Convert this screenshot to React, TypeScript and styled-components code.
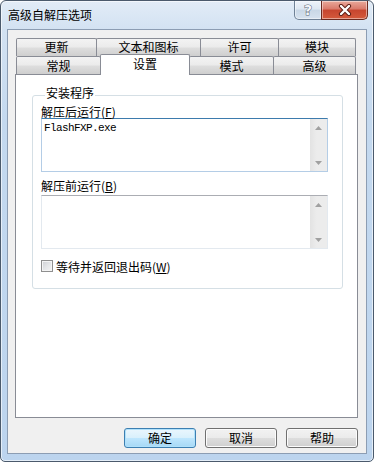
import * as React from "react"
import styled, { createGlobalStyle } from "styled-components"

const GlobalStyle = createGlobalStyle`
  html, body {
    margin: 0;
    padding: 0;
    background: #ffffff;
  }
  body {
    font-family: "Noto Sans CJK SC", "DejaVu Sans", sans-serif;
    font-size: 12px;
    color: #000;
  }
`

const Window = styled.div`
  box-sizing: border-box;
  width: 374px;
  height: 462px;
  border: 1px solid #4b5a6c;
  border-radius: 6px 6px 5px 5px;
  background: linear-gradient(180deg, #e2ecf7 0px, #d3e2f2 28px, #c4d9ef 120px, #bcd4ee 100%);
  box-shadow: inset 0 0 0 1px rgba(255, 255, 255, 0.6);
  padding: 0 6px 7px 6px;
  display: flex;
  flex-direction: column;
`

const TitleBar = styled.div`
  height: 28px;
  display: flex;
  align-items: flex-start;
`

const Title = styled.div`
  flex: 1;
  padding: 6px 0 0 1px;
  line-height: 16px;
  font-size: 12px;
  color: #000;
`

const CaptionButtons = styled.div`
  display: flex;
  margin-right: -1px;
`

const CaptionButton = styled.div<{ $close?: boolean }>`
  box-sizing: border-box;
  width: ${p => (p.$close ? 47 : 28)}px;
  height: 19px;
  display: flex;
  align-items: center;
  justify-content: center;
  border: 1px solid ${p => (p.$close ? "#6b2a20" : "#6f8196")};
  border-top: none;
  border-radius: ${p => (p.$close ? "0 0 5px 0" : "0 0 0 5px")};
  ${p => (p.$close ? "margin-left: -1px;" : "")}
  background: ${p =>
    p.$close
      ? "linear-gradient(180deg, #e9a99b 0%, #d9796a 45%, #c7452f 50%, #d45a3c 100%)"
      : "linear-gradient(180deg, #eef3fa 0%, #dde7f2 45%, #c9d7e6 50%, #d6e2ef 100%)"};
  box-shadow: inset 0 0 0 1px rgba(255, 255, 255, 0.45);
`

const HelpGlyph = styled.span`
  font-family: "DejaVu Sans", sans-serif;
  font-weight: bold;
  font-size: 14px;
  line-height: 14px;
  color: #f4f6f9;
  -webkit-text-stroke: 1px #5b6675;
  paint-order: stroke fill;
`

const Client = styled.div`
  flex: 1;
  background: #f0f0f0;
  border: 1px solid #8c9db3;
  padding: 8px 8px 5px 7px;
  display: flex;
  flex-direction: column;
`

const TabRow = styled.div`
  height: 18px;
  display: flex;
  padding-left: 1px;
`

// $back: tab of the rear row, its label sits a little higher
const Tab = styled.div<{ $w: number; $active?: boolean; $back?: boolean }>`
  box-sizing: border-box;
  width: ${p => p.$w}px;
  height: ${p => (p.$active ? 21 : 18)}px;
  ${p => (p.$active ? "margin-top: -2px; position: relative; z-index: 1;" : "")}
  margin-left: -1px;
  padding-top: ${p => (p.$back ? 0 : 1)}px;
  border: 1px solid #898c95;
  border-bottom: none;
  border-radius: 2px 2px 0 0;
  background: ${p =>
    p.$active
      ? "#ffffff"
      : "linear-gradient(180deg, #f3f3f3 0%, #ebebeb 48%, #dedede 52%, #cfcfcf 100%)"};
  text-align: center;
  line-height: 16px;
  font-size: 12px;
  color: #000;
  &:first-child {
    margin-left: 0;
  }
`

const Panel = styled.div`
  box-sizing: border-box;
  height: 344px;
  border: 1px solid #898c95;
  background: #ffffff;
  padding: 11px 14px 0 16px;
`

const Group = styled.fieldset`
  margin: 0;
  padding: 1px 14px 15px 8px;
  border: 1px solid #d5dfe5;
  border-radius: 3px;
  box-shadow: inset 1px 1px 0 #ffffff;
`

const Legend = styled.legend`
  padding: 0 1px 4px 1px;
  margin-left: 4px;
  line-height: 14px;
  font-size: 12px;
  color: #000;
`

const FieldLabel = styled.div<{ $gap?: number }>`
  line-height: 13px;
  margin-top: ${p => p.$gap ?? 0}px;
  font-size: 12px;
`

const TextBox = styled.div<{ $focused?: boolean; $mb?: number }>`
  box-sizing: border-box;
  height: 54px;
  margin-top: ${p => p.$mb ?? 0}px;
  display: flex;
  border: 1px solid ${p => (p.$focused ? "#b4cde6" : "#e3e9ef")};
  border-top-color: ${p => (p.$focused ? "#3d7bad" : "#abadb3")};
  background: #ffffff;
`

const TextContent = styled.div`
  flex: 1;
  padding: 2px 2px 0 2px;
  font-family: "Liberation Mono", "DejaVu Sans Mono", monospace;
  font-size: 11px;
  letter-spacing: -0.6px;
  line-height: 14px;
  color: #000;
`

const ScrollBar = styled.div`
  width: 17px;
  background: linear-gradient(90deg, #e3e3e3 0%, #ececec 40%, #ececec 100%);
  display: flex;
  flex-direction: column;
  justify-content: space-between;
`

const ScrollArrow = styled.div`
  height: 17px;
  display: flex;
  align-items: center;
  justify-content: center;
`

const CheckRow = styled.div`
  margin-top: 10px;
  display: flex;
  align-items: center;
  height: 14px;
`

const CheckBox = styled.div`
  box-sizing: border-box;
  width: 12px;
  height: 12px;
  border: 1px solid #8f8f8f;
  background: linear-gradient(135deg, #cdcfd3 0%, #e4e5e7 50%, #f5f5f5 100%);
  box-shadow: inset 0 0 0 1px #f4f4f4;
  margin-right: 3px;
`

const ButtonRow = styled.div`
  margin-top: 10px;
  display: flex;
  justify-content: flex-end;
  gap: 9px;
`

const Button = styled.div<{ $default?: boolean }>`
  box-sizing: border-box;
  width: 72px;
  height: 20px;
  border: 1px solid ${p => (p.$default ? "#3c7fb1" : "#707070")};
  border-radius: 3px;
  background: ${p =>
    p.$default
      ? "linear-gradient(180deg, #eaf6fd 0%, #d9f0fc 48%, #bee6fd 52%, #a7d9f5 100%)"
      : "linear-gradient(180deg, #f2f2f2 0%, #ebebeb 48%, #dddddd 52%, #cfcfcf 100%)"};
  box-shadow: inset 0 0 0 1px ${p => (p.$default ? "#b0e1fb" : "#fcfcfc")};
  text-align: center;
  line-height: 18px;
  font-size: 12px;
  color: #000;
`

const Arrow = ({ down }: { down?: boolean }) => (
  <svg width="7" height="4" viewBox="0 0 7 4">
    <path d={down ? "M0 0 H7 L3.5 4 Z" : "M0 4 H7 L3.5 0 Z"} fill="#a0a0a0" />
  </svg>
)

const Scroll = () => (
  <ScrollBar>
    <ScrollArrow>
      <Arrow />
    </ScrollArrow>
    <ScrollArrow>
      <Arrow down />
    </ScrollArrow>
  </ScrollBar>
)

const CloseIcon = () => (
  <svg width="14" height="12" viewBox="0 0 14 12">
    <path d="M3 2 L11 10 M11 2 L3 10" stroke="#5a1b12" strokeWidth="4.2" strokeLinecap="round" />
    <path d="M3 2 L11 10 M11 2 L3 10" stroke="#ffffff" strokeWidth="2.4" strokeLinecap="round" />
  </svg>
)

const topTabs = [
  { label: "更新", w: 81 },
  { label: "文本和图标", w: 105 },
  { label: "许可", w: 79 },
  { label: "模块", w: 78 },
]

const bottomTabs = [
  { label: "常规", w: 85 },
  { label: "设置", w: 90, active: true },
  { label: "模式", w: 85 },
  { label: "高级", w: 83 },
]

export default function App() {
  return (
    <>
      <GlobalStyle />
      <Window>
        <TitleBar>
          <Title>高级自解压选项</Title>
          <CaptionButtons>
            <CaptionButton>
              <HelpGlyph>?</HelpGlyph>
            </CaptionButton>
            <CaptionButton $close>
              <CloseIcon />
            </CaptionButton>
          </CaptionButtons>
        </TitleBar>
        <Client>
          <TabRow>
            {topTabs.map(t => (
              <Tab key={t.label} $w={t.w} $back>{t.label}</Tab>
            ))}
          </TabRow>
          <TabRow>
            {bottomTabs.map(t => (
              <Tab key={t.label} $w={t.w} $active={t.active}>{t.label}</Tab>
            ))}
          </TabRow>
          <Panel>
            <Group>
              <Legend>安装程序</Legend>
              <FieldLabel>解压后运行(<u>F</u>)</FieldLabel>
              <TextBox $focused>
                <TextContent>FlashFXP.exe</TextContent>
                <Scroll />
              </TextBox>
              <FieldLabel $gap={7}>解压前运行(<u>B</u>)</FieldLabel>
              <TextBox $mb={3}>
                <TextContent />
                <Scroll />
              </TextBox>
              <CheckRow>
                <CheckBox />
                <span>等待并返回退出码(<u>W</u>)</span>
              </CheckRow>
            </Group>
          </Panel>
          <ButtonRow>
            <Button $default>确定</Button>
            <Button>取消</Button>
            <Button>帮助</Button>
          </ButtonRow>
        </Client>
      </Window>
    </>
  )
}
